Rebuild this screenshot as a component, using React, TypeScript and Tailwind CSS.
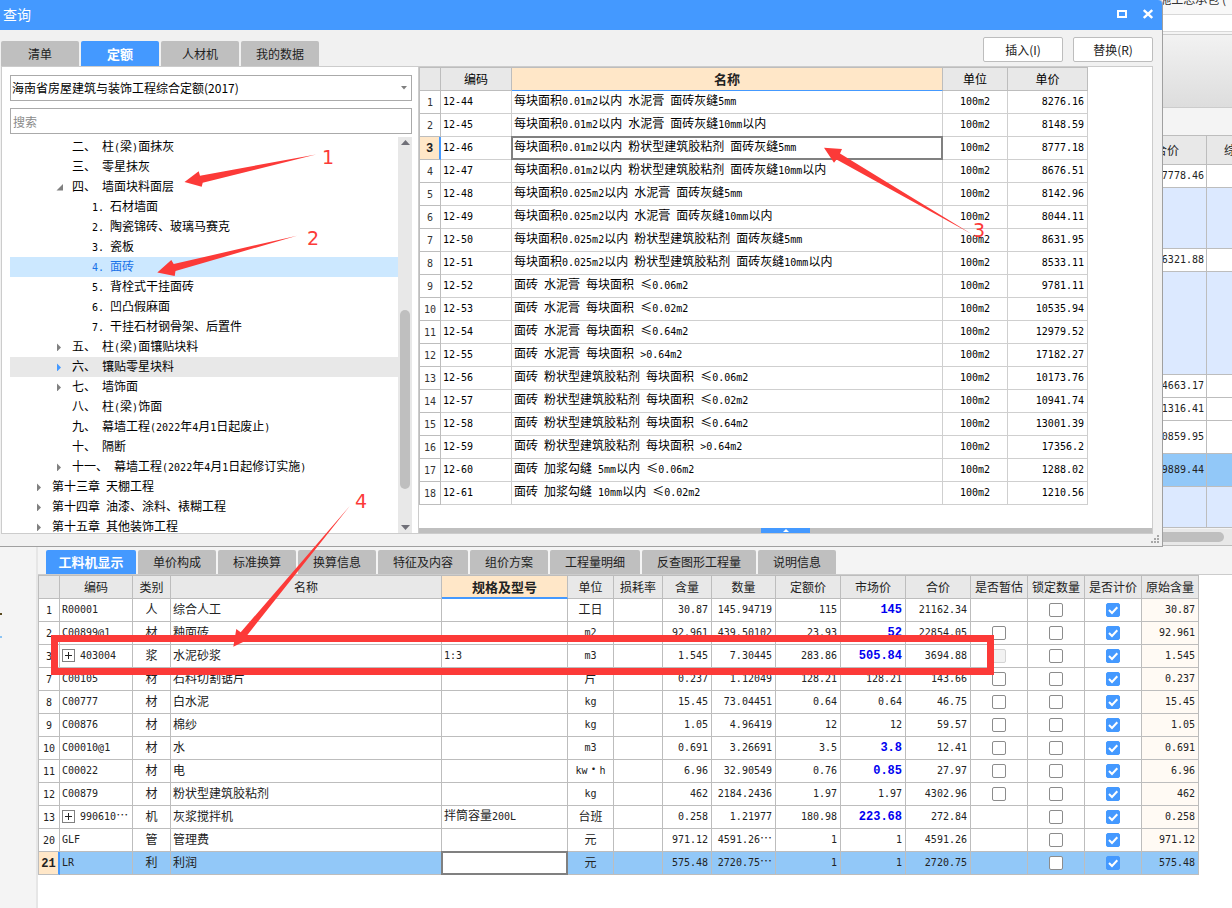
import React from "react";

const quotaRows: [string, string, string][] = [
  ["12-44", "每块面积0.01m2以内 水泥膏 面砖灰缝5mm", "8276.16"],
  ["12-45", "每块面积0.01m2以内 水泥膏 面砖灰缝10mm以内", "8148.59"],
  ["12-46", "每块面积0.01m2以内 粉状型建筑胶粘剂 面砖灰缝5mm", "8777.18"],
  ["12-47", "每块面积0.01m2以内 粉状型建筑胶粘剂 面砖灰缝10mm以内", "8676.51"],
  ["12-48", "每块面积0.025m2以内 水泥膏 面砖灰缝5mm", "8142.96"],
  ["12-49", "每块面积0.025m2以内 水泥膏 面砖灰缝10mm以内", "8044.11"],
  ["12-50", "每块面积0.025m2以内 粉状型建筑胶粘剂 面砖灰缝5mm", "8631.95"],
  ["12-51", "每块面积0.025m2以内 粉状型建筑胶粘剂 面砖灰缝10mm以内", "8533.11"],
  ["12-52", "面砖 水泥膏 每块面积 ≤0.06m2", "9781.11"],
  ["12-53", "面砖 水泥膏 每块面积 ≤0.02m2", "10535.94"],
  ["12-54", "面砖 水泥膏 每块面积 ≤0.64m2", "12979.52"],
  ["12-55", "面砖 水泥膏 每块面积 >0.64m2", "17182.27"],
  ["12-56", "面砖 粉状型建筑胶粘剂 每块面积 ≤0.06m2", "10173.76"],
  ["12-57", "面砖 粉状型建筑胶粘剂 每块面积 ≤0.02m2", "10941.74"],
  ["12-58", "面砖 粉状型建筑胶粘剂 每块面积 ≤0.64m2", "13001.39"],
  ["12-59", "面砖 粉状型建筑胶粘剂 每块面积 >0.64m2", "17356.2"],
  ["12-60", "面砖 加浆勾缝 5mm以内 ≤0.06m2", "1288.02"],
  ["12-61", "面砖 加浆勾缝 10mm以内 ≤0.02m2", "1210.56"],
];

type TreeNode = { text: string; level: 2 | 3 | 4; arrow?: "open" | "closed" | "hover"; state?: "selected" | "hover" };

const tree: TreeNode[] = [
  { text: "二、 柱(梁)面抹灰", level: 3 },
  { text: "三、 零星抹灰", level: 3 },
  { text: "四、 墙面块料面层", level: 3, arrow: "open" },
  { text: "1. 石材墙面", level: 4 },
  { text: "2. 陶瓷锦砖、玻璃马赛克", level: 4 },
  { text: "3. 瓷板", level: 4 },
  { text: "4. 面砖", level: 4, state: "selected" },
  { text: "5. 背栓式干挂面砖", level: 4 },
  { text: "6. 凹凸假麻面", level: 4 },
  { text: "7. 干挂石材钢骨架、后置件", level: 4 },
  { text: "五、 柱(梁)面镶贴块料", level: 3, arrow: "closed" },
  { text: "六、 镶贴零星块料", level: 3, arrow: "hover", state: "hover" },
  { text: "七、 墙饰面", level: 3, arrow: "closed" },
  { text: "八、 柱(梁)饰面", level: 3 },
  { text: "九、 幕墙工程(2022年4月1日起废止)", level: 3 },
  { text: "十、 隔断", level: 3 },
  { text: "十一、 幕墙工程(2022年4月1日起修订实施)", level: 3, arrow: "closed" },
  { text: "第十三章 天棚工程", level: 2, arrow: "closed" },
  { text: "第十四章 油漆、涂料、裱糊工程", level: 2, arrow: "closed" },
  { text: "第十五章 其他装饰工程", level: 2, arrow: "closed" },
];

type Resource = {
  no: string; code: string; kind: string; name: string; spec: string; unit: string;
  content: string; qty: string; quota: string; market: string; total: string;
  bold?: boolean; expand?: boolean; estimate: "none" | "box" | "disabled";
};

const resources: Resource[] = [
  { no: "1", code: "R00001", kind: "人", name: "综合人工", spec: "", unit: "工日", content: "30.87", qty: "145.94719", quota: "115", market: "145", total: "21162.34", bold: true, estimate: "none" },
  { no: "2", code: "C00899@1", kind: "材", name: "釉面砖", spec: "", unit: "m2", content: "92.961", qty: "439.50102", quota: "23.93", market: "52", total: "22854.05", bold: true, estimate: "box" },
  { no: "3", code: "403004", kind: "浆", name: "水泥砂浆", spec: "1:3", unit: "m3", content: "1.545", qty: "7.30445", quota: "283.86", market: "505.84", total: "3694.88", bold: true, expand: true, estimate: "disabled" },
  { no: "7", code: "C00105", kind: "材", name: "石料切割锯片", spec: "", unit: "片", content: "0.237", qty: "1.12049", quota: "128.21", market: "128.21", total: "143.66", estimate: "box" },
  { no: "8", code: "C00777", kind: "材", name: "白水泥", spec: "", unit: "kg", content: "15.45", qty: "73.04451", quota: "0.64", market: "0.64", total: "46.75", estimate: "box" },
  { no: "9", code: "C00876", kind: "材", name: "棉纱", spec: "", unit: "kg", content: "1.05", qty: "4.96419", quota: "12", market: "12", total: "59.57", estimate: "box" },
  { no: "10", code: "C00010@1", kind: "材", name: "水", spec: "", unit: "m3", content: "0.691", qty: "3.26691", quota: "3.5", market: "3.8", total: "12.41", bold: true, estimate: "box" },
  { no: "11", code: "C00022", kind: "材", name: "电", spec: "", unit: "kw·h", content: "6.96", qty: "32.90549", quota: "0.76", market: "0.85", total: "27.97", bold: true, estimate: "box" },
  { no: "12", code: "C00879", kind: "材", name: "粉状型建筑胶粘剂", spec: "", unit: "kg", content: "462", qty: "2184.2436", quota: "1.97", market: "1.97", total: "4302.96", estimate: "box" },
  { no: "13", code: "990610…", kind: "机", name: "灰浆搅拌机", spec: "拌筒容量200L", unit: "台班", content: "0.258", qty: "1.21977", quota: "180.98", market: "223.68", total: "272.84", bold: true, expand: true, estimate: "none" },
  { no: "20", code: "GLF", kind: "管", name: "管理费", spec: "", unit: "元", content: "971.12", qty: "4591.26…", quota: "1", market: "1", total: "4591.26", estimate: "none" },
  { no: "21", code: "LR", kind: "利", name: "利润", spec: "", unit: "元", content: "575.48", qty: "2720.75…", quota: "1", market: "1", total: "2720.75", estimate: "none" },
];

/* Half-width runs are set in a monospaced face so that two of them fill one CJK cell. */
function T({ children, bold }: { children: string; bold?: boolean }) {
  const latin = bold
    ? "text-[12px] font-bold [font-family:'Liberation_Mono',monospace]"
    : "text-[10px] [font-family:'DejaVu_Sans_Mono',monospace]";
  return (
    <span className="whitespace-pre">
      {children.split(/([\x20-\x7e]+)/).map((run, i) =>
        i % 2 ? <span key={i} className={latin}>{run}</span> : run
      )}
    </span>
  );
}

function TreeArrow({ kind }: { kind: "open" | "closed" | "hover" }) {
  return (
    <button type="button" aria-label="展开" className="flex h-5 w-2 items-center">
      <svg width="8" height="8" viewBox="0 0 8 8" className={kind === "hover" ? "fill-[#4499ff]" : "fill-[#808080]"}>
        {kind === "open" ? <path d="M7 1V7.5H0.5Z" /> : <path d="M1 0.5L5 4.5L1 8.5Z" />}
      </svg>
    </button>
  );
}

function TreeItem({ node }: { node: TreeNode }) {
  const pad = node.level === 2 ? "pl-[26px]" : node.level === 3 ? "pl-[46px]" : "pl-[66px]";
  const tone =
    node.state === "selected" ? "bg-[#cce8ff] text-[#1a73e8]" : node.state === "hover" ? "bg-[#e8e8e8] text-black" : "text-black";
  return (
    <li className={`flex h-5 items-center ${pad} ${tone}`}>
      <span className="flex w-4 shrink-0 items-center">{node.arrow && <TreeArrow kind={node.arrow} />}</span>
      <T>{node.text}</T>
    </li>
  );
}

function CheckBox({ label, checked, disabled }: { label: string; checked?: boolean; disabled?: boolean }) {
  return (
    <span className="relative mx-auto block size-[14px]">
      <input
        type="checkbox"
        aria-label={label}
        defaultChecked={checked}
        disabled={disabled}
        className="peer block size-[14px] appearance-none rounded-[2px] border border-[#8c8c8c] bg-white checked:border-[#4499ff] checked:bg-[#4499ff] disabled:border-[#d4d4d4] disabled:bg-[#f2f2f2]"
      />
      <svg viewBox="0 0 14 14" className="pointer-events-none absolute inset-0 hidden size-[14px] peer-checked:block">
        <path d="M3 7L6 10L11.3 4.3" fill="none" stroke="white" strokeWidth="2" />
      </svg>
    </span>
  );
}

function QueryDialog() {
  const cell = "h-[23px] border-r border-b border-[#cfcfcf] p-0 pb-[2px] leading-4";
  const head = "h-6 border-t border-r border-b border-[#bdbdbd] bg-[#e8e8e8] p-0 font-normal leading-4";
  return (
    <section aria-label="查询" className="flex min-w-0 flex-1 flex-col rounded-tr-[4px] border-r border-b border-[#a0a0a0] bg-[#f1f1f1]">
      <header className="flex h-[30px] items-center justify-between rounded-tr-[4px] bg-[#4499ff] pr-[7px] pb-[2px] pl-[3px] text-white">
        <h1 className="text-[14px] leading-5">查询</h1>
        <div className="flex gap-3">
          <button type="button" aria-label="最大化" className="p-[2px]">
            <svg width="10" height="10" viewBox="0 0 10 10"><path d="M1 2H9V8H1Z" fill="none" stroke="white" strokeWidth="2" /></svg>
          </button>
          <button type="button" aria-label="关闭" className="p-[2px]">
            <svg width="10" height="10" viewBox="0 0 10 10"><path d="M0.8 1L9.2 9M9.2 1L0.8 9" stroke="white" strokeWidth="2.4" /></svg>
          </button>
        </div>
      </header>

      <div className="flex h-9 items-end justify-between pr-[9px] pl-px">
        <nav className="flex gap-[2px] text-[12px] leading-4 text-[#222]">
          {["清单", "定额", "人材机", "我的数据"].map((t, i) => (
            <button
              key={t}
              type="button"
              className={`h-[25px] w-[78px] rounded-t-[2px] ${i === 1 ? "bg-[#4499ff] text-[13px] font-bold text-white" : "bg-[#bfbfbf]"}`}
            >
              {t}
            </button>
          ))}
        </nav>
        <div className="flex gap-[10px] pb-1 text-[12px] leading-4 text-[#222]">
          {["插入(I)", "替换(R)"].map((t) => (
            <button key={t} type="button" className="h-[25px] w-20 rounded-[2px] border border-[#bdbdbd] bg-white">{t}</button>
          ))}
        </div>
      </div>

      <div className="relative flex pr-[9px] pb-3 pl-px">
        <div className="w-[418px] shrink-0 border border-[#cccccc] bg-white pr-[6px] pl-2">
          <div className="relative mt-2">
            <select aria-label="定额库" className="block h-[26px] w-full appearance-none border border-[#aaaaaa] bg-white px-[1px] text-[12px] text-black">
              <option>海南省房屋建筑与装饰工程综合定额(2017)</option>
            </select>
            <svg width="6" height="4" viewBox="0 0 6 4" className="pointer-events-none absolute top-[11px] right-[5px] fill-[#808080]"><path d="M0 0H6L3 3.5Z" /></svg>
          </div>
          <input
            aria-label="搜索"
            placeholder="搜索"
            className="mt-[7px] block h-[26px] w-full border border-[#aaaaaa] bg-white px-[2px] text-[12px] placeholder:text-[#8a8a8a]"
          />
          <div className="mt-[3px] flex h-[396px] overflow-hidden">
            <ul className="min-w-0 flex-1 text-[12px] leading-4">
              {tree.map((n) => <TreeItem key={n.text} node={n} />)}
            </ul>
            <div className="flex w-[14px] flex-col items-center bg-[#e8e8e8] pt-[3px] pb-[3px]">
              <svg width="9" height="5" viewBox="0 0 9 5" className="fill-[#707078]"><path d="M4.5 0L9 5H0Z" /></svg>
              <div className="flex-1" />
              <div className="h-[179px] w-[10px] rounded-full bg-[#bfbfbf]" />
              <div className="h-9" />
              <svg width="9" height="5" viewBox="0 0 9 5" className="fill-[#707078]"><path d="M0 0H9L4.5 5Z" /></svg>
            </div>
          </div>
        </div>

        <div className="flex min-w-0 flex-1 flex-col border-t border-r border-b border-[#cccccc] bg-white">
          <table className="w-[669px] table-fixed border-separate border-spacing-0 border-l border-[#bdbdbd] text-[12px] text-black">
            <colgroup>
              <col className="w-[21px]" /><col className="w-[71px]" /><col className="w-[431px]" /><col className="w-[65px]" /><col className="w-[80px]" />
            </colgroup>
            <thead>
              <tr>
                <th className={head} />
                <th className={head}>编码</th>
                <th className="h-6 border-t border-r border-b border-[#bdbdbd] border-b-[#4499ff] bg-[#ffe7c8] p-0 text-[13px] leading-4 font-bold text-[#222]">名称</th>
                <th className={head}>单位</th>
                <th className={head}>单价</th>
              </tr>
            </thead>
            <tbody>
              {quotaRows.map(([code, name, price], i) => (
                <tr key={code}>
                  {i === 2 ? (
                    <td className="h-[23px] border-r-2 border-b border-r-[#4499ff] border-b-[#bdbdbd] bg-[#ffe7c8] p-0 text-center leading-4 text-[#222]"><T bold>3</T></td>
                  ) : (
                    <td className="h-[23px] border-r border-b border-[#bdbdbd] p-0 text-center leading-4 text-[#333]"><T>{String(i + 1)}</T></td>
                  )}
                  <td className={`${cell} pl-[2px]`}><T>{code}</T></td>
                  <td className={`${cell} relative pl-[2px]`}>
                    <T>{name}</T>
                    {i === 2 && <span className="pointer-events-none absolute -inset-px border-2 border-[#808080]" />}
                  </td>
                  <td className={`${cell} text-center`}><T>100m2</T></td>
                  <td className={`${cell} pr-[3px] text-right`}><T>{price}</T></td>
                </tr>
              ))}
            </tbody>
          </table>
          <div className="flex-1" />
          <div className="flex h-[5px] justify-center bg-[#bfbfbf]">
            <button type="button" aria-label="展开面板" className="flex h-[5px] w-[49px] items-center justify-center bg-[#4499ff]">
              <svg width="6" height="3" viewBox="0 0 6 3" className="fill-white"><path d="M3 0L6 3H0Z" /></svg>
            </button>
          </div>
        </div>
        <svg width="8" height="8" viewBox="0 0 8 8" className="absolute right-[3px] bottom-[3px] fill-[#a8a8a8]">
          <path d="M6 0h2v2H6zM3 3h2v2H3zM6 3h2v2H6zM0 6h2v2H0zM3 6h2v2H3zM6 6h2v2H6z" />
        </svg>
      </div>
    </section>
  );
}

const stripRows: { h: string; v: string; tone: string }[] = [
  { h: "h-[23px]", v: "7778.46", tone: "bg-white" },
  { h: "h-[61px]", v: "", tone: "bg-[#dce9ff]" },
  { h: "h-[23px]", v: "6321.88", tone: "bg-white" },
  { h: "h-[103px]", v: "", tone: "bg-[#dce9ff]" },
  { h: "h-[23px]", v: "4663.17", tone: "bg-white" },
  { h: "h-[23px]", v: "1316.41", tone: "bg-white" },
  { h: "h-[33px]", v: "0859.95", tone: "bg-white" },
  { h: "h-[33px]", v: "9889.44", tone: "bg-[#92c8f8]" },
  { h: "h-[41px]", v: "", tone: "bg-[#dce9ff]" },
];

function BackgroundStrip() {
  return (
    <aside className="flex w-[69px] shrink-0 flex-col overflow-hidden bg-[#f4f4f4]">
      <div className="flex h-[15px] items-start justify-end overflow-hidden border-b border-[#d8d8d8] bg-[#f8f8f8] pr-[6px]">
        <span className="-mt-[9px] shrink-0 text-[12px] leading-4 whitespace-nowrap text-[#333]">施工总承包 (</span>
      </div>
      <div className="h-4 bg-white" />
      <div className="h-[3px] border-t border-[#d8d8d8]" />
      <div className="h-[74px] border-y border-[#cccccc] bg-linear-to-b from-[#f2f2f2] to-[#dddddd]" />
      <div className="h-[27px]" />
      <div className="flex justify-end overflow-hidden">
        <table className="w-[108px] shrink-0 table-fixed border-separate border-spacing-0 text-[12px] text-[#222]">
          <colgroup><col className="w-[83px]" /><col className="w-[25px]" /></colgroup>
          <thead>
            <tr>
              <th className="h-[30px] border-t border-r border-b border-[#bdbdbd] bg-[#e8e8e8] p-0 pl-1 leading-4 font-normal">合价</th>
              <th className="h-[30px] overflow-hidden border-y border-[#bdbdbd] bg-[#e8e8e8] p-0 pl-[17px] text-left leading-4 font-normal whitespace-nowrap">综</th>
            </tr>
          </thead>
          <tbody>
            {stripRows.map((r, i) => (
              <tr key={i} className={r.tone}>
                <td className={`${r.h} border-r border-b border-[#bdbdbd] p-0 pr-[2px] pb-[2px] text-right leading-4`}><T>{r.v}</T></td>
                <td className="border-b border-[#bdbdbd] p-0" />
              </tr>
            ))}
          </tbody>
        </table>
      </div>
      <div className="mt-px flex h-[17px] items-center border-b border-[#bdbdbd] bg-[#e8e8e8]">
        <div className="h-[10px] w-[61px] rounded-r-full bg-[#bfbfbf]" />
      </div>
    </aside>
  );
}

const detailTabs: [string, string][] = [
  ["工料机显示", "w-[90px]"], ["单价构成", "w-[78px]"], ["标准换算", "w-[78px]"], ["换算信息", "w-[78px]"], ["特征及内容", "w-[90px]"],
  ["组价方案", "w-[78px]"], ["工程量明细", "w-[90px]"], ["反查图形工程量", "w-[114px]"], ["说明信息", "w-[78px]"],
];

const columns: [string, string][] = [
  ["", "w-[21px]"], ["编码", "w-[73px]"], ["类别", "w-[38px]"], ["名称", "w-[271px]"], ["规格及型号", "w-[126px]"], ["单位", "w-[46px]"],
  ["损耗率", "w-[49px]"], ["含量", "w-[49px]"], ["数量", "w-[64px]"], ["定额价", "w-[65px]"], ["市场价", "w-[65px]"], ["合价", "w-[65px]"],
  ["是否暂估", "w-[57px]"], ["锁定数量", "w-[57px]"], ["是否计价", "w-[57px]"], ["原始含量", "w-[57px]"],
];

function DetailPanel() {
  const box = "h-[23px] border-r border-b border-[#bdbdbd] p-0 leading-4";
  const cell = `${box} pb-[2px]`;
  const num = `${cell} pr-[3px] text-right`;
  return (
    <section className="flex flex-1">
      <aside className="flex w-[38px] shrink-0 flex-col gap-[21px] border-r-2 border-[#e6e6e6] bg-[#f4f4f4] pt-[66px]">
        <span className="h-[2px] w-[2px] bg-[#5a4a20]" />
        <span className="h-[2px] w-[2px] bg-[#8cc4f4]" />
      </aside>
      <div className="min-w-0 flex-1 bg-white">
        <nav className="flex h-7 items-end gap-[2px] border-b border-[#cccccc] bg-[#f4f4f4] pl-2 text-[12px] leading-4 text-[#222]">
          {detailTabs.map(([t, w], i) => (
            <button key={t} type="button" className={`h-6 rounded-t-[2px] whitespace-nowrap ${w} ${i === 0 ? "bg-[#4499ff] text-[13px] font-bold text-white" : "bg-[#bfbfbf]"}`}>{t}</button>
          ))}
        </nav>
        <table className="w-[1161px] table-fixed border-separate border-spacing-0 border-l border-[#bdbdbd] text-[12px] text-[#222]">
          <colgroup>{columns.map(([t, w]) => <col key={t} className={w} />)}</colgroup>
          <thead>
            <tr>
              {columns.map(([t]) =>
                t === "规格及型号" ? (
                  <th key={t} className="h-6 border-t border-r border-b-2 border-[#bdbdbd] border-b-[#4499ff] bg-[#ffe7c8] p-0 text-[13px] leading-4 font-bold whitespace-nowrap">{t}</th>
                ) : (
                  <th key={t} className="h-6 border-t border-r border-b border-[#bdbdbd] bg-[#e8e8e8] p-0 leading-4 font-normal whitespace-nowrap">{t}</th>
                )
              )}
            </tr>
          </thead>
          <tbody>
            {resources.map((r) => {
              const sel = r.no === "21";
              return (
                <tr key={r.no} className={sel ? "bg-[#92c8f8]" : "bg-white"}>
                  {sel ? (
                    <td className="h-[23px] border-r-2 border-b border-r-[#4499ff] border-b-[#bdbdbd] bg-[#ffe7c8] p-0 text-center leading-4"><T bold>{r.no}</T></td>
                  ) : (
                    <td className={`${box} text-center`}><T>{r.no}</T></td>
                  )}
                  <td className={`${cell} pl-[2px]`}>
                    <span className="flex items-center gap-[5px]">
                      {r.expand && (
                        <button type="button" aria-label="展开" className="size-[13px] shrink-0 border border-[#808080] bg-white">
                          <svg viewBox="0 0 11 11" className="size-[11px]"><path d="M2 5.5H9M5.5 2V9" stroke="#222" strokeWidth="1" /></svg>
                        </button>
                      )}
                      <T>{r.code}</T>
                    </span>
                  </td>
                  <td className={`${cell} text-center`}>{r.kind}</td>
                  <td className={`${cell} pl-[2px]`}>{r.name}</td>
                  <td className={`${cell} relative pl-[2px]`}>
                    <T>{r.spec}</T>
                    {sel && <input aria-label="规格及型号" className="absolute -inset-px h-6 w-[127px] border-2 border-[#808080] bg-white px-[2px]" />}
                  </td>
                  <td className={`${cell} text-center`}><T>{r.unit}</T></td>
                  <td className={cell} />
                  <td className={num}><T>{r.content}</T></td>
                  <td className={num}><T>{r.qty}</T></td>
                  <td className={num}><T>{r.quota}</T></td>
                  <td className={`${num} ${r.bold ? "text-[#0000f0]" : ""}`}><T bold={r.bold}>{r.market}</T></td>
                  <td className={num}><T>{r.total}</T></td>
                  <td className={box}>{r.estimate !== "none" && <CheckBox label={`${r.name} 是否暂估`} disabled={r.estimate === "disabled"} />}</td>
                  <td className={box}><CheckBox label={`${r.name} 锁定数量`} /></td>
                  <td className={box}><CheckBox label={`${r.name} 是否计价`} checked /></td>
                  <td className={`${num} ${sel ? "" : "bg-[#fffaf4]"}`}><T>{r.content}</T></td>
                </tr>
              );
            })}
          </tbody>
        </table>
      </div>
    </section>
  );
}

/* Red review marks drawn on top of both windows. */
function Annotations() {
  return (
    <svg width="1232" height="908" viewBox="0 0 1232 908" className="pointer-events-none absolute top-0 left-0 fill-[#fc3a38] text-[19px] [font-family:'DejaVu_Sans',sans-serif]">
      <rect x="54.5" y="638.5" width="936" height="33" fill="none" stroke="#fc3a38" strokeWidth="7" />
      <path d="M184.5 182L198.7 171.3L200 175.7L316 154.5L202.7 182.7L201.7 186.7Z" />
      <path d="M157.3 272.5L171.3 260L173.7 264L297 235.7L175.5 271L174.7 276Z" />
      <path d="M824 147.7L842 149L840 153.5L972 234.3L836.5 159.5L834 162.7Z" />
      <path d="M233.3 646.7L236.3 629L240.7 632.3L350 505.7L246 636.7L249.3 639Z" />
      <text x="322" y="164">1</text>
      <text x="307" y="245">2</text>
      <text x="973" y="237">3</text>
      <text x="355" y="508">4</text>
    </svg>
  );
}

export default function App() {
  return (
    <main lang="zh-CN" className="relative flex min-h-screen w-full flex-col overflow-hidden bg-white [font-family:'Noto_Sans_CJK_SC',sans-serif]">
      <div className="flex bg-[#f4f4f4]">
        <QueryDialog />
        <BackgroundStrip />
      </div>
      <DetailPanel />
      <Annotations />
    </main>
  );
}
